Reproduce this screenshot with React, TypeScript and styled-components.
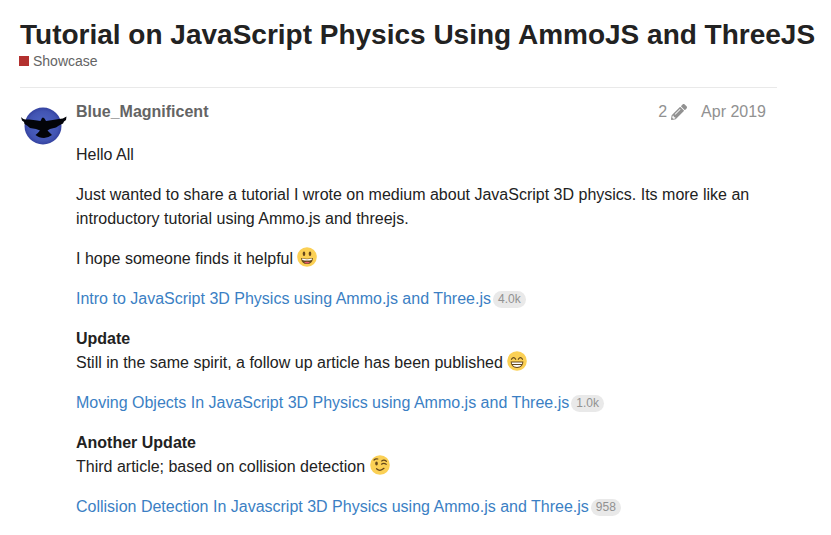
import React from "react";
import styled, { createGlobalStyle } from "styled-components";
import { FaPencilAlt } from "react-icons/fa";

const GlobalStyle = createGlobalStyle`
  body {
    margin: 0;
    background: #fff;
    color: #222;
    font: 16px/24px "Liberation Sans", Arial, sans-serif;
  }
`;

const Page = styled.main`
  padding: 18px 0 0 20px;
`;

const Title = styled.h1`
  margin: 0;
  font-size: 28px;
  line-height: 34px;
  font-weight: 700;
`;

const Category = styled.a`
  display: flex;
  width: max-content;
  align-items: center;
  gap: 4px;
  margin-left: -1px;
  color: #646464;
  font-size: 14px;
  line-height: 18px;
  text-decoration: none;

  &::before {
    content: "";
    width: 10px;
    height: 10px;
    background: #b3312f;
  }
`;

const Post = styled.article`
  display: grid;
  grid-template-columns: 48px minmax(0, 1fr);
  column-gap: 8px;
  margin: 17px 54px 0 0;
  padding-top: 12px;
  border-top: 1px solid #e9e9e9;
`;

const AvatarLink = styled.a`
  svg {
    display: block;
    margin-top: 3px;
  }
`;

const PostHeader = styled.header`
  display: flex;
  justify-content: space-between;
  padding-right: 11px;
`;

const Author = styled.a`
  color: #646464;
  font-weight: 700;
  text-decoration: none;
`;

const PostInfo = styled.div`
  display: flex;
  gap: 14px;
  color: #919191;
`;

const EditButton = styled.button`
  display: flex;
  align-items: center;
  gap: 4px;
  padding: 0;
  border: 0;
  background: none;
  color: inherit;
  font: inherit;
  cursor: pointer;
`;

const PostDate = styled.a`
  color: inherit;
  text-decoration: none;
`;

const Cooked = styled.div`
  padding-top: 3px;

  p {
    margin: 16px 0;
  }
`;

const ArticleLink = styled.a`
  color: #3b7fc4;
  text-decoration: none;
`;

const Clicks = styled.span`
  display: inline-block;
  margin-left: 2px;
  padding: 0 5px;
  border-radius: 10px;
  background: #e9e9e9;
  color: #919191;
  font-size: 12px;
  line-height: 17px;
  vertical-align: 1px;
`;

const EmojiIcon = styled.svg`
  width: 20px;
  height: 20px;
  vertical-align: -3px;
`;

type Mood = "smiley" | "grin" | "wink";

function Emoji({ mood }: { mood: Mood }) {
  return (
    <EmojiIcon viewBox="0 0 20 20" role="img" aria-label={mood}>
      <circle cx="10" cy="10" r="9.8" fill="#fbd055" />
      {mood === "smiley" && (
        <>
          <ellipse cx="7" cy="6.8" rx="1.3" ry="2.2" fill="#65471b" />
          <ellipse cx="13" cy="6.8" rx="1.3" ry="2.2" fill="#65471b" />
          <path d="M4 11Q10 12.6 16 11Q15.4 17 10 17Q4.600 17 4 11Z" fill="#65471b" />
          <path d="M5 11.500Q10 12.800 15 11.500L14.700 13Q10 14 5.300 13Z" fill="#fff" />
          <path d="M7 15.600Q10 13.700 13 15.600Q10 17.300 7 15.600Z" fill="#e8596e" />
        </>
      )}
      {mood === "grin" && (
        <>
          <path
            d="M4.500 8.300Q6.600 4.800 8.700 8.300M11.300 8.300Q13.400 4.800 15.500 8.300"
            fill="none"
            stroke="#65471b"
            strokeWidth="1.2"
            strokeLinecap="round"
          />
          <path d="M3.600 10.500H16.400Q16 17 10 17Q4 17 3.600 10.500Z" fill="#65471b" />
          <path d="M4.700 11.400H15.300L15 13H5ZM5.500 13.900H14.500Q13 16 10 16Q7 16 5.500 13.900Z" fill="#fff" />
        </>
      )}
      {mood === "wink" && (
        <>
          <ellipse cx="6.500" cy="8.500" rx="1.3" ry="1.9" fill="#65471b" />
          <path
            d="M4 5Q5.500 3.300 7.800 4M11.700 6Q14 4.200 16.400 6.300M11.500 9.200Q13.800 7.300 16.200 9.300M6.500 13.700Q10 17 14 13.300"
            fill="none"
            stroke="#65471b"
            strokeWidth="1.2"
            strokeLinecap="round"
          />
        </>
      )}
    </EmojiIcon>
  );
}

function Avatar() {
  return (
    <svg width="48" height="44" viewBox="0 0 48 44" role="img" aria-label="Blue_Magnificent">
      <defs>
        <radialGradient id="moon">
          <stop offset="0" stopColor="#5068c8" />
          <stop offset="0.8" stopColor="#4254b2" />
          <stop offset="1" stopColor="#3442a0" />
        </radialGradient>
      </defs>
      <circle cx="23" cy="23" r="18.500" fill="url(#moon)" />
      <path
        d="M1 14Q3 17 9 16.500Q16 17 20.500 18L22 15L23 14.500L24.500 15.500L26 18Q33 17 39 16Q43 16 46.500 13.500L46 17L44 18.500L43 20.500L39 22.500L36 24.500L30 26L27.500 27.500Q30 30 32 32Q28 35 24 35Q19 35 15.500 32Q18 30 20 27.500L16 26L10 25L7 22.500L4.500 21L4 19L2 17.500Z"
        fill="#030409"
      />
    </svg>
  );
}

function TrackedLink({ title, clicks }: { title: string; clicks: string }) {
  return (
    <p>
      <ArticleLink href="#">{title}</ArticleLink>
      <Clicks>{clicks}</Clicks>
    </p>
  );
}

export default function App() {
  return (
    <>
      <GlobalStyle />
      <Page>
        <Title>Tutorial on JavaScript Physics Using AmmoJS and ThreeJS</Title>
        <Category href="#">Showcase</Category>
        <Post>
          <AvatarLink href="#">
            <Avatar />
          </AvatarLink>
          <div>
            <PostHeader>
              <Author href="#">Blue_Magnificent</Author>
              <PostInfo>
                <EditButton type="button" title="Edit history">
                  2 <FaPencilAlt aria-hidden />
                </EditButton>
                <PostDate href="#">Apr 2019</PostDate>
              </PostInfo>
            </PostHeader>
            <Cooked>
              <p>Hello All</p>
              <p>
                Just wanted to share a tutorial I wrote on medium about JavaScript 3D physics. Its
                more like an introductory tutorial using Ammo.js and threejs.
              </p>
              <p>
                I hope someone finds it helpful <Emoji mood="smiley" />
              </p>
              <TrackedLink
                title="Intro to JavaScript 3D Physics using Ammo.js and Three.js"
                clicks="4.0k"
              />
              <p>
                <strong>Update</strong>
                <br />
                Still in the same spirit, a follow up article has been published{" "}
                <Emoji mood="grin" />
              </p>
              <TrackedLink
                title="Moving Objects In JavaScript 3D Physics using Ammo.js and Three.js"
                clicks="1.0k"
              />
              <p>
                <strong>Another Update</strong>
                <br />
                Third article; based on collision detection <Emoji mood="wink" />
              </p>
              <TrackedLink
                title="Collision Detection In Javascript 3D Physics using Ammo.js and Three.js"
                clicks="958"
              />
            </Cooked>
          </div>
        </Post>
      </Page>
    </>
  );
}
